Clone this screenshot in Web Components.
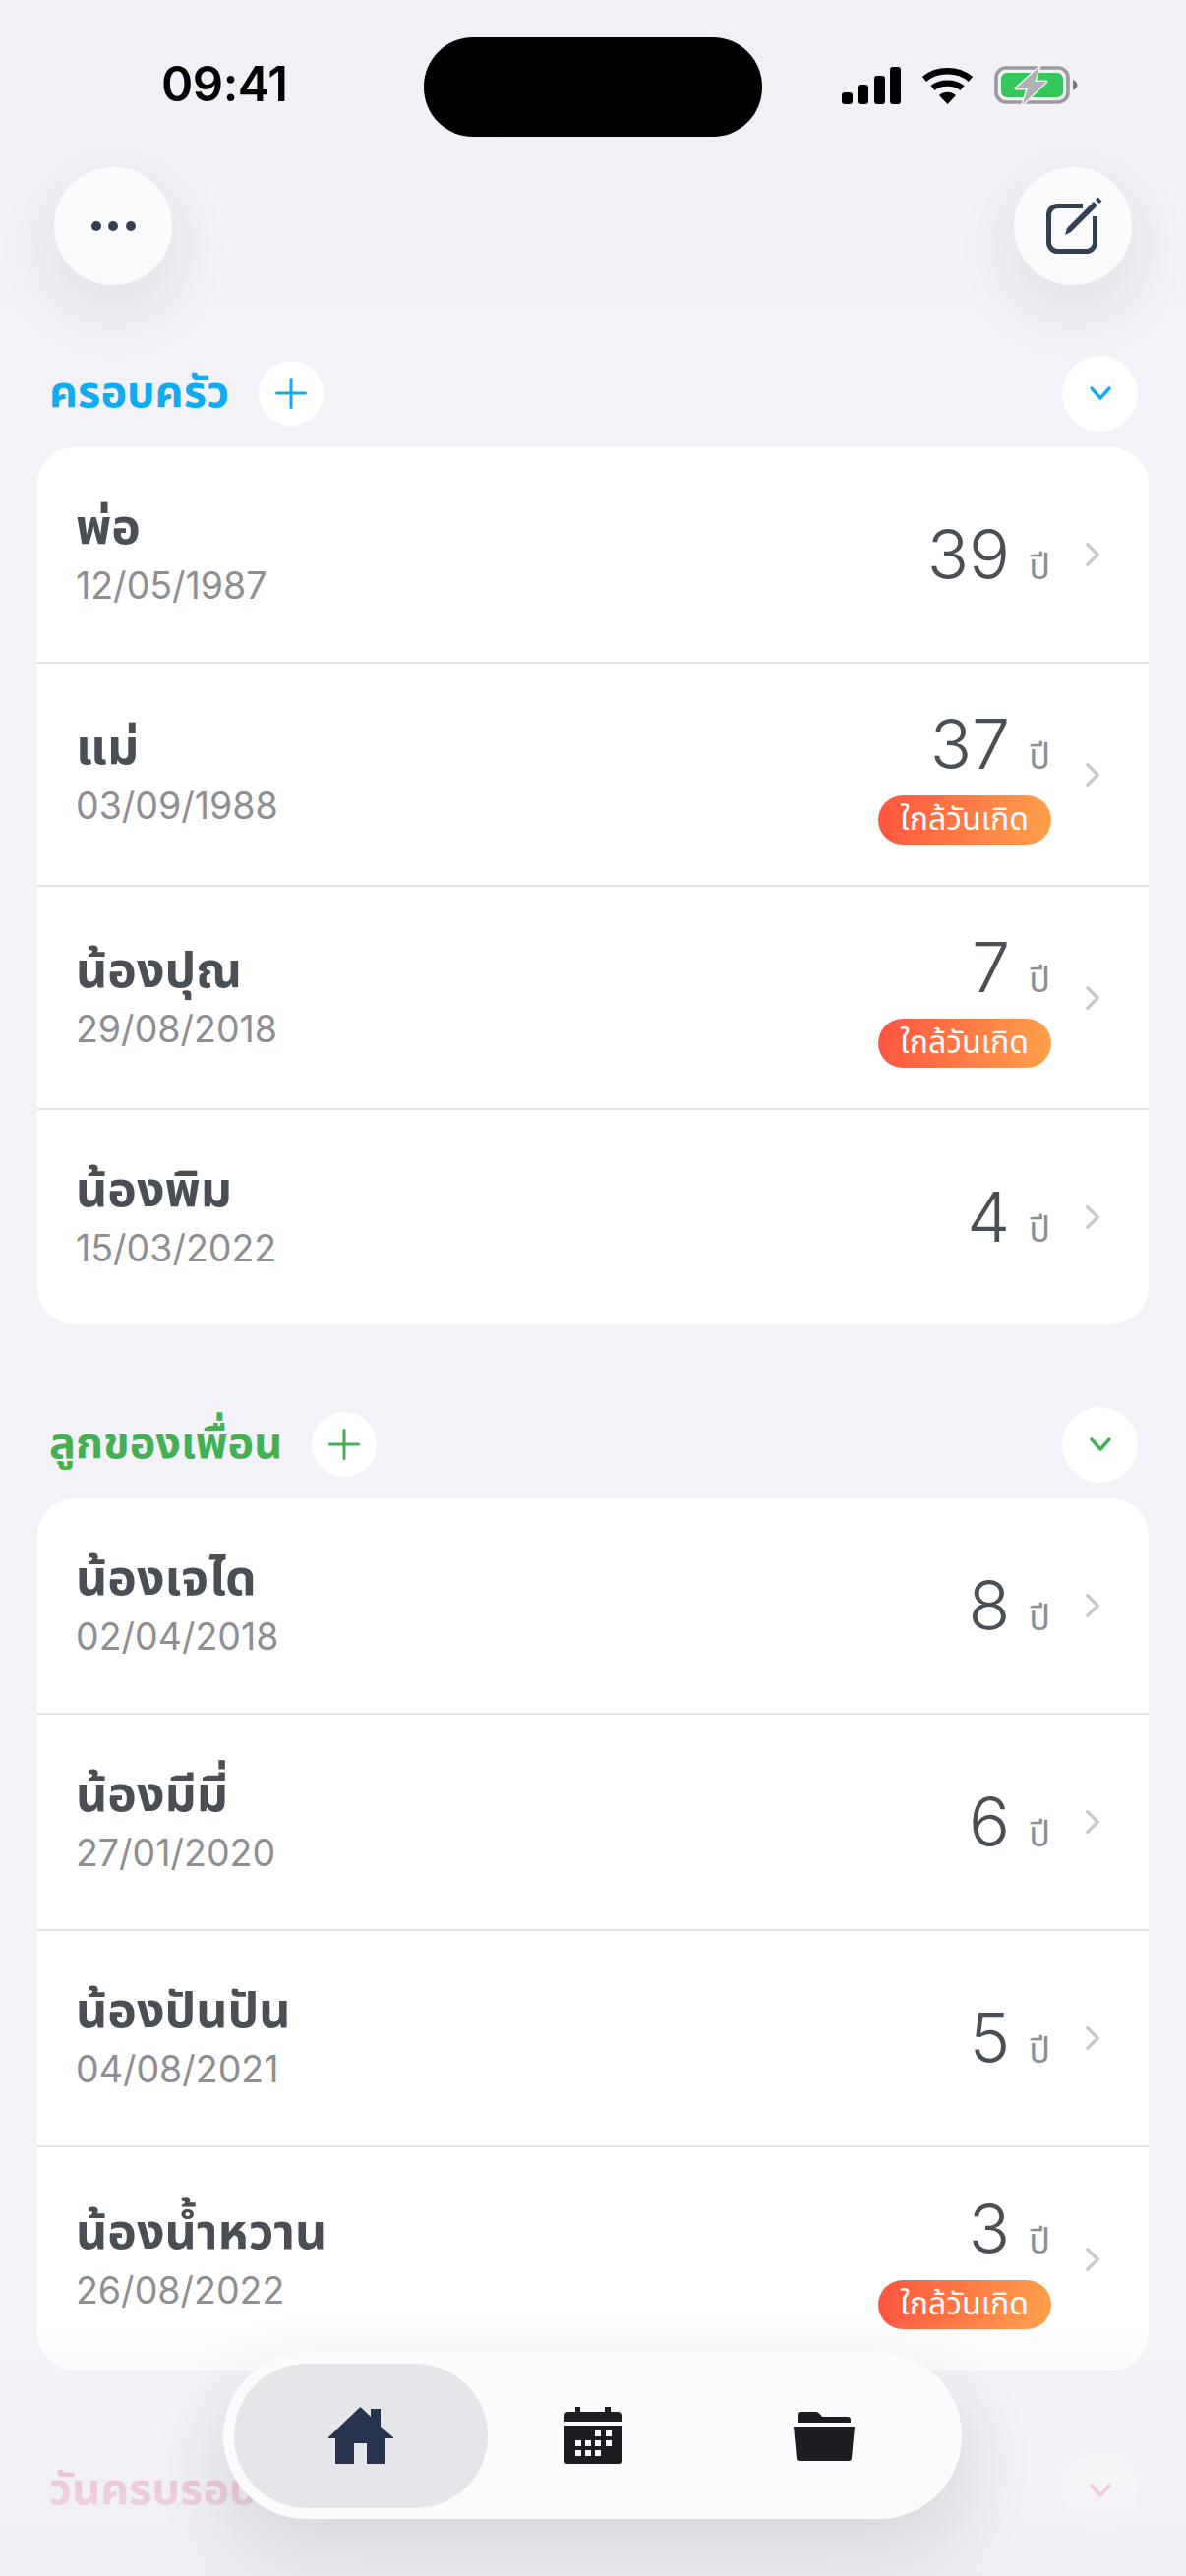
<!DOCTYPE html>
<html lang="th">
<head>
<meta charset="utf-8">
<title>วันเกิด</title>
<style>
  html, body { margin: 0; padding: 0; background: #f2f2f8; }
  body { width: 1206px; height: 2620px; overflow: hidden; font-family: "Noto Sans Thai", "Inter", "Noto Sans", "DejaVu Sans", sans-serif; }
</style>
</head>
<body>
<birthday-app>
  <status-bar></status-bar>
  <top-actions></top-actions>

  <person-group title="ครอบครัว" color="#12aaf0">
    <person-row name="พ่อ" date="12/05/1987" age="39"></person-row>
    <person-row name="แม่" date="03/09/1988" age="37" near></person-row>
    <person-row name="น้องปุณ" date="29/08/2018" age="7" near></person-row>
    <person-row name="น้องพิม" date="15/03/2022" age="4" last></person-row>
  </person-group>

  <person-group title="ลูกของเพื่อน" color="#45b052">
    <person-row name="น้องเจได" date="02/04/2018" age="8"></person-row>
    <person-row name="น้องมีมี่" date="27/01/2020" age="6"></person-row>
    <person-row name="น้องปันปัน" date="04/08/2021" age="5"></person-row>
    <person-row name="น้องน้ำหวาน" date="26/08/2022" age="3" near last></person-row>
  </person-group>

  <person-group title="วันครบรอบ" color="#e8548c"></person-group>

  <bottom-nav></bottom-nav>
</birthday-app>

<script>
(() => {
  // shared icon bits
  const plusIcon = c => `<svg width="32" height="32" viewBox="0 0 32 32" fill="none" stroke="${c}" stroke-width="3" stroke-linecap="round"><path d="M16 1.500v29M1.500 16h29"/></svg>`;
  const chevDown = c => `<svg width="22" height="14" viewBox="0 0 22 14" fill="none" stroke="${c}" stroke-width="3.4" stroke-linecap="round" stroke-linejoin="round"><path d="M2 2l9 10 9-10"/></svg>`;

  class BirthdayApp extends HTMLElement {
    constructor(){
      super();
      this.attachShadow({mode:'open'}).innerHTML = `
        <style>
          :host{ display:block; position:relative; width:1206px; height:2620px; overflow:hidden; background:linear-gradient(#f0f0f6,#f2f2f8 420px); }
          /* content dissolves behind the tab bar */
          .fade{
            position:absolute; left:0; right:0; bottom:0; height:260px;
            background:linear-gradient(to bottom, rgba(240,240,245,0) 0%, rgba(240,240,245,.3) 20%, rgba(240,240,245,.76) 65%, rgba(238,238,243,.92) 100%);
            pointer-events:none;
          }
        </style>
        <slot></slot>
        <div class="fade"></div>
        <slot name="over"></slot>`;
    }
    connectedCallback(){
      const nav = this.querySelector('bottom-nav');
      if(nav) nav.slot = 'over';
    }
  }

  class StatusBar extends HTMLElement {
    constructor(){
      super();
      this.attachShadow({mode:'open'}).innerHTML = `
        <style>
          :host{ display:block; height:170px; position:relative; }
          .row{ display:flex; align-items:flex-start; height:170px; box-sizing:border-box; padding-top:38px; }
          .time{ width:431px; box-sizing:border-box; padding:24px 0 0 164px; font:600 49px/48px "Inter","Liberation Sans",sans-serif; color:#000; letter-spacing:-.5px; }
          .island{ width:344px; height:101px; border-radius:50px; background:#000; }
          .icons{ display:flex; align-items:flex-start; gap:21px; padding:30px 0 0 81px; }
          svg{ display:block; }
        </style>
        <div class="row">
          <div class="time">09:41</div>
          <div class="island"></div>
          <div class="icons">
            <svg width="60" height="38" viewBox="0 0 60 38" fill="#000">
              <rect x="0" y="26" width="11" height="12" rx="3"/>
              <rect x="16" y="18" width="11" height="20" rx="3"/>
              <rect x="33" y="9" width="11" height="29" rx="3"/>
              <rect x="49" y="0" width="11" height="38" rx="3"/>
            </svg>
            <svg width="53" height="38" viewBox="0 0 53 38" fill="none" stroke="#000">
              <path d="M3 12.500C15.500 1.500 37.500 1.500 50 12.500" stroke-width="6.400"/>
              <path d="M11.500 21.500C19 15 34 15 41.500 21.500" stroke-width="6.400"/>
              <path d="M18 29c5-4.200 12-4.200 17 0l-8.500 9z" fill="#000" stroke="none"/>
            </svg>
            <svg width="86" height="40" viewBox="0 0 86 40" style="margin-top:-1px">
              <rect x="2" y="2" width="73" height="35" rx="10" fill="none" stroke="#9a9a9f" stroke-width="3.600"/>
              <rect x="7" y="7" width="63" height="25" rx="6" fill="#34c759"/>
              <path d="M80 14c2.500 1 4.500 3 4.500 5.500s-2 4.500-4.500 5.500z" fill="#77777c"/>
              <path d="M46 1L22 23h12l-5 16 24-23H41z" fill="#aeaeb3" stroke="#f1f1f7" stroke-width="3" stroke-linejoin="round" paint-order="stroke"/>
            </svg>
          </div>
        </div>`;
    }
  }

  class RoundButton extends HTMLElement {
    constructor(){
      super();
      this.attachShadow({mode:'open'}).innerHTML = `
        <style>
          :host{ display:flex; align-items:center; justify-content:center; flex:none; width:var(--size,66px); height:var(--size,66px); border-radius:50%; background:var(--bg,#fff); box-shadow:var(--shadow,none); }
        </style>
        <slot></slot>`;
    }
  }

  class TopActions extends HTMLElement {
    constructor(){
      super();
      this.attachShadow({mode:'open'}).innerHTML = `
        <style>
          :host{ display:flex; justify-content:space-between; padding:0 55px; height:120px; margin-bottom:72px; --size:120px; --bg:#fbfbfe; --shadow:0 22px 70px rgba(40,40,70,.09); }
          .dots{ display:flex; gap:7.500px; }
          .dots i{ display:block; width:10px; height:10px; border-radius:50%; background:#334155; }
          svg{ display:block; overflow:visible; }
        </style>
        <round-button><div class="dots"><i></i><i></i><i></i></div></round-button>
        <round-button>
          <svg width="60" height="60" viewBox="0 0 60 60" fill="none">
            <path d="M40 9.500H14.500a9 9 0 0 0-9 9v28a9 9 0 0 0 9 9h29a9 9 0 0 0 9-9V20" stroke="#334155" stroke-width="5"/>
            <path d="M22 39l2-7L51 5l4 4-27 27z" fill="#334155"/>
            <path d="M53 3l2.500-2.500 4 4L57 7z" fill="#334155"/>
          </svg>
        </round-button>`;
    }
  }

  class PersonGroup extends HTMLElement {
    constructor(){
      super();
      const title = this.getAttribute('title') || '';
      const c = this.getAttribute('color') || '#12aaf0';
      this.removeAttribute('title');
      this.attachShadow({mode:'open'}).innerHTML = `
        <style>
          :host{ display:block; padding:0 38px; margin-bottom:84px; }
          .head{ display:flex; align-items:center; height:76px; margin-bottom:17px; padding-left:12px; padding-right:11px; }
          h2{ margin:0; font-size:45px; line-height:76px; font-weight:700; color:${c}; }
          .add{ margin-left:30px; --size:66px; }
          .sp{ flex:1; }
          .toggle{ --size:77px; }
          .card{ background:#fff; border-radius:38px; overflow:hidden; }
        </style>
        <div class="head">
          <h2>${title}</h2>
          <round-button class="add">${plusIcon(c)}</round-button>
          <div class="sp"></div>
          <round-button class="toggle">${chevDown(c)}</round-button>
        </div>
        <div class="card"><slot></slot></div>`;
    }
  }

  class PersonRow extends HTMLElement {
    constructor(){
      super();
      const near = this.hasAttribute('near');
      const last = this.hasAttribute('last');
      this.attachShadow({mode:'open'}).innerHTML = `
        <style>
          :host{ display:flex; align-items:center; box-sizing:border-box; height:${near ? 227 : last ? 218 : 220}px; padding:0 50px 0 39px; border-bottom:${last ? '0' : '2px solid #e3e3e7'}; }
          .who{ flex:1; min-width:0; display:flex; flex-direction:column; padding-bottom:6px; }
          .name{ font-size:50px; line-height:70px; font-weight:700; color:#4a4f55; }
          .date{ font:400 37.500px/46px "Inter","Liberation Sans",sans-serif; color:#8e8e93; }
          .right{ display:flex; flex-direction:column; align-items:flex-end; }
          .age{ display:flex; align-items:baseline; }
          .num{ font:350 70px/84px "Inter","Liberation Sans",sans-serif; color:#4a4f55; }
          .unit{ margin-left:19px; margin-right:1px; font-size:36px; line-height:40px; color:#8e8e93; }
          .near-wrap{ padding-bottom:2px; }
          .badge{ height:50px; box-sizing:border-box; padding:0 23px; border-radius:25px; background:linear-gradient(100deg,#ff5440,#ffa24a); color:#fff; font-size:32px; line-height:50px; margin-top:10px; }
          .chev{ display:block; margin-left:35px; flex:none; }
        </style>
        <div class="who">
          <div class="name">${this.getAttribute('name')}</div>
          <div class="date">${this.getAttribute('date')}</div>
        </div>
        <div class="right ${near ? 'near-wrap' : ''}">
          <div class="age"><span class="num">${this.getAttribute('age')}</span><span class="unit">ปี</span></div>
          ${near ? '<div class="badge">ใกล้วันเกิด</div>' : ''}
        </div>
        <svg class="chev" width="14" height="24" viewBox="0 0 14 24" fill="none" stroke="#c7c7cc" stroke-width="3.400" stroke-linecap="round" stroke-linejoin="round"><path d="M1.800 1.800L12.200 12 1.800 22.200"/></svg>`;
    }
  }

  class BottomNav extends HTMLElement {
    constructor(){
      super();
      this.attachShadow({mode:'open'}).innerHTML = `
        <style>
          :host{ position:absolute; left:227px; top:2393px; width:751px; height:169px; box-sizing:border-box; padding:11px; display:flex; border-radius:85px; background:rgba(251,251,254,.96); backdrop-filter:blur(10px); box-shadow:0 30px 80px rgba(40,40,70,.14); }
          .tab{ flex:none; width:258px; display:flex; align-items:center; justify-content:center; border-radius:74px; }
          .tab.mid{ flex:1; }
          .tab.on{ background:rgba(228,228,233,.95); }
          svg{ display:block; }
        </style>
        <div class="tab on">
          <svg width="66" height="60" viewBox="0 0 66 60" fill="#26344d"><path d="M32.500 0L43 10V2h10v18l13 11v1H57v26H39V37H26v21H7V32H0v-1z"/></svg>
        </div>
        <div class="tab mid">
          <svg width="58" height="60" viewBox="0 0 58 60" fill="#1c1c22"><path d="M11 0h5v5h25V0h6v5h7a4 4 0 0 1 4 4v6H0V9a4 4 0 0 1 4-4h7z"/><path d="M0 19h58v36a3 3 0 0 1-3 3H3a3 3 0 0 1-3-3z"/><g fill="#fbfbfe"><rect x="31" y="24" width="6" height="6"/><rect x="42" y="24" width="6" height="6"/><rect x="11" y="34" width="6" height="6"/><rect x="21" y="34" width="6" height="6"/><rect x="31" y="34" width="6" height="6"/><rect x="42" y="34" width="6" height="6"/><rect x="11" y="44" width="6" height="6"/><rect x="21" y="44" width="6" height="6"/><rect x="31" y="44" width="6" height="6"/></g></svg>
        </div>
        <div class="tab">
          <svg width="62" height="50" viewBox="0 0 62 50" fill="#1c1c22"><path d="M4 3a3 3 0 0 1 3-3h15c2 0 3 .5 5 2.500L29 5h26a3 3 0 0 1 3 3v3H4z"/><path d="M0 15h62l-3 32a3 3 0 0 1-3 3H6a3 3 0 0 1-3-3z"/></svg>
        </div>`;
    }
  }

  customElements.define('birthday-app', BirthdayApp);
  customElements.define('status-bar', StatusBar);
  customElements.define('round-button', RoundButton);
  customElements.define('top-actions', TopActions);
  customElements.define('person-group', PersonGroup);
  customElements.define('person-row', PersonRow);
  customElements.define('bottom-nav', BottomNav);
})();
</script>
</body>
</html>
